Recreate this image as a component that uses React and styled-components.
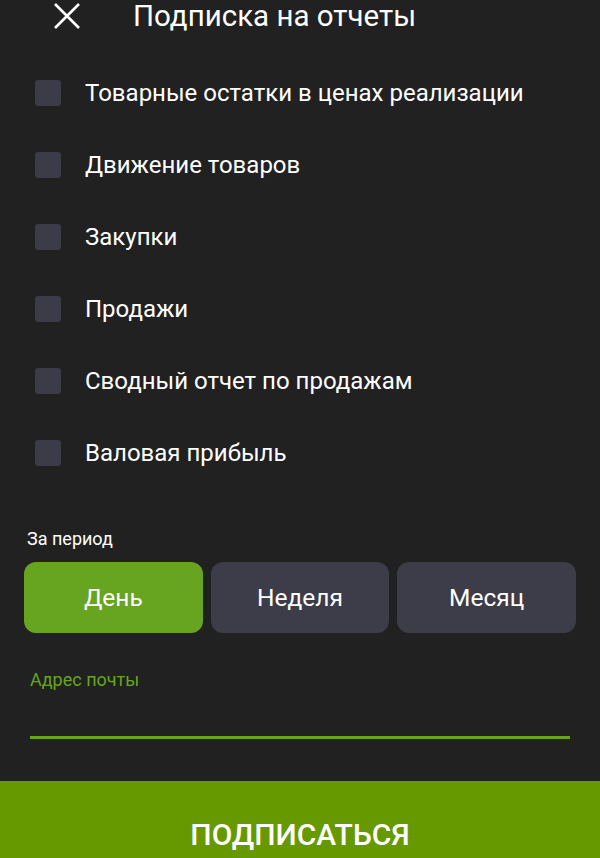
import { useState } from "react";
import styled, { createGlobalStyle } from "styled-components";

const GlobalStyle = createGlobalStyle`
  html, body {
    margin: 0;
    padding: 0;
    background: #212121;
  }
  body {
    font-family: Roboto, "Noto Sans", sans-serif;
  }
`;

const Screen = styled.div`
  width: 600px;
  height: 858px;
  background: #212121;
  display: flex;
  flex-direction: column;
  overflow: hidden;
`;

const Header = styled.div`
  height: 32px;
  display: flex;
  align-items: center;
  padding-left: 53px;
  gap: 52px;
`;

const CloseButton = styled.button`
  width: 28px;
  height: 28px;
  padding: 0;
  border: none;
  background: none;
  display: flex;
  align-items: center;
  justify-content: center;
  cursor: pointer;
`;

const Title = styled.h1`
  margin: 0;
  font-size: 29.5px;
  font-weight: 400;
  color: #fff;
`;

const List = styled.div`
  display: flex;
  flex-direction: column;
  padding: 25px 0 0 35px;
`;

const Row = styled.label`
  height: 72px;
  display: flex;
  align-items: center;
  gap: 24px;
  cursor: pointer;
`;

const Box = styled.span`
  width: 26px;
  height: 26px;
  border-radius: 3px;
  background: ${(p) => (p.checked ? "#67a521" : "#3b3c47")};
  flex-shrink: 0;
`;

const Label = styled.span`
  font-size: 24px;
  color: #fff;
`;

const Section = styled.div`
  padding: 39px 24px 0;
`;

const Caption = styled.div`
  font-size: 18px;
  color: #fff;
  padding-left: 3px;
  margin-bottom: 13px;
`;

const Segments = styled.div`
  display: grid;
  grid-template-columns: repeat(3, 1fr);
  gap: 8px;
`;

const Segment = styled.button`
  height: 71px;
  border: none;
  border-radius: 12px;
  background: ${(p) => (p.active ? "#67a521" : "#3c3d48")};
  color: #fff;
  font-family: inherit;
  font-size: 24.5px;
  cursor: pointer;
`;

const Field = styled.div`
  padding: 36px 30px 0;
`;

const FieldLabel = styled.div`
  font-size: 18px;
  color: #67a521;
`;

const Input = styled.input`
  display: block;
  width: 100%;
  box-sizing: border-box;
  margin-top: 5px;
  height: 44px;
  background: transparent;
  border: none;
  border-bottom: 3px solid #67a521;
  outline: none;
  color: #fff;
  font-family: inherit;
  font-size: 20px;
`;

const Submit = styled.button`
  margin-top: auto;
  height: 77px;
  border: none;
  background: #669900;
  color: #fff;
  font-family: inherit;
  font-size: 30px;
  font-weight: 500;
  text-transform: uppercase;
  padding-top: 30px;
  cursor: pointer;
`;

const reports = [
  "Товарные остатки в ценах реализации",
  "Движение товаров",
  "Закупки",
  "Продажи",
  "Сводный отчет по продажам",
  "Валовая прибыль",
];

const periods = ["День", "Неделя", "Месяц"];

export default function App() {
  const [checked, setChecked] = useState({});
  const [period, setPeriod] = useState(0);

  return (
    <Screen>
      <GlobalStyle />
      <Header>
        <CloseButton aria-label="Закрыть">
          <svg width="28" height="28" viewBox="0 0 28 28">
            <path d="M2 2 L26 26 M26 2 L2 26" stroke="#fff" strokeWidth="2.6" />
          </svg>
        </CloseButton>
        <Title>Подписка на отчеты</Title>
      </Header>
      <List>
        {reports.map((r, i) => (
          <Row key={r} onClick={() => setChecked({ ...checked, [i]: !checked[i] })}>
            <Box checked={checked[i]} />
            <Label>{r}</Label>
          </Row>
        ))}
      </List>
      <Section>
        <Caption>За период</Caption>
        <Segments>
          {periods.map((p, i) => (
            <Segment key={p} active={period === i} onClick={() => setPeriod(i)}>
              {p}
            </Segment>
          ))}
        </Segments>
      </Section>
      <Field>
        <FieldLabel>Адрес почты</FieldLabel>
        <Input type="email" />
      </Field>
      <Submit>Подписаться</Submit>
    </Screen>
  );
}
